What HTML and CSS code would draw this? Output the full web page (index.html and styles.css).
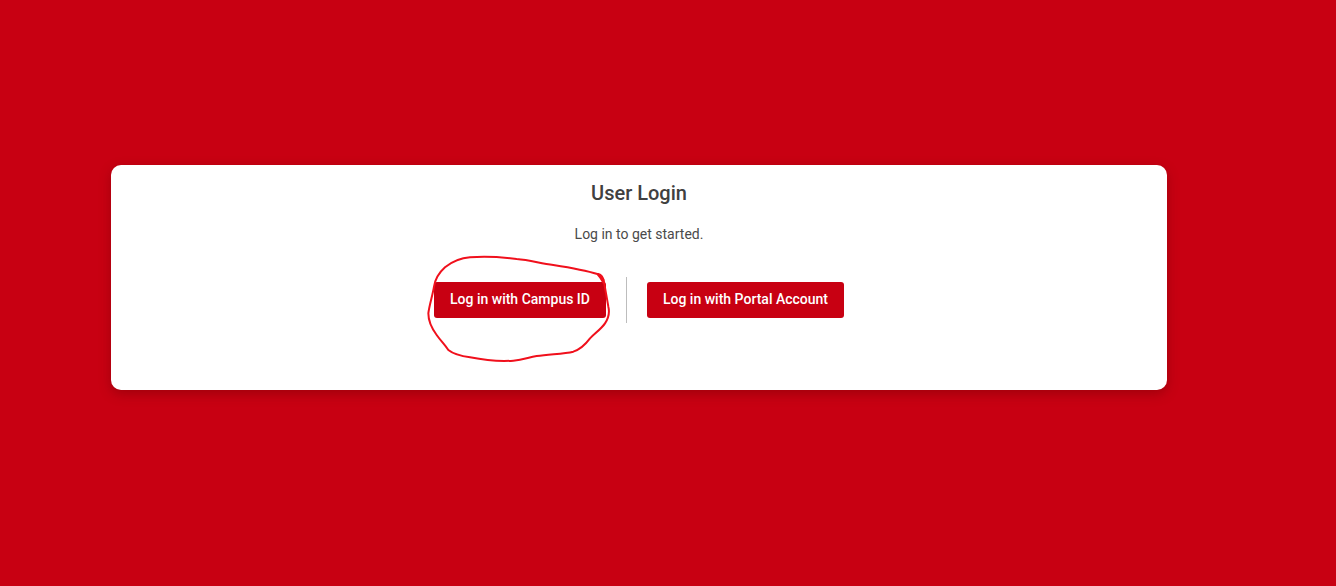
FILE: index.html
```html
<!DOCTYPE html>
<html lang="en">
<head>
<meta charset="utf-8">
<title>User Login</title>
<link rel="stylesheet" href="styles.css">
</head>
<body>
<main class="page">
  <section class="card">
    <h1 class="title">User Login</h1>
    <p class="lead">Log in to get started.</p>
    <div class="actions">
      <div class="slot">
        <a class="btn" href="#">Log in with Campus ID</a>
        <svg class="scribble" viewBox="0 0 600 345" aria-hidden="true">
          <path d="M535 72C555 85 552 95 550 98C545 88 538 78 532 72C500 62 470 56 400 45C360 40 330 30 290 27C250 22 200 18 150 22C120 24 95 36 75 52C55 70 45 90 42 110C38 135 28 165 25 190C25 210 35 235 50 255C62 272 75 285 85 300C100 312 120 318 150 322C190 330 240 335 280 332C310 330 325 322 350 318C390 312 430 312 460 305C480 298 495 285 510 265C525 250 545 235 555 220C565 205 570 190 565 170C560 140 555 115 552 95C550 85 545 75 535 72" />
        </svg>
      </div>
      <span class="divider"></span>
      <a class="btn" href="#">Log in with Portal Account</a>
    </div>
  </section>
</main>
</body>
</html>
```
FILE: styles.css
```css
* { box-sizing: border-box; }
html, body { margin: 0; height: 100%; }
body {
  background: #c80012;
  font-family: Roboto, "Liberation Sans", sans-serif;
  overflow: hidden;
}
.page {
  padding: 165px 169px 0 111px;
}
.card {
  height: 225px;
  background: #fff;
  border-radius: 10px;
  box-shadow: 0 4px 12px rgba(90, 0, 0, 0.35);
  padding-top: 16px;
  text-align: center;
}
.title {
  margin: 0;
  font-size: 20px;
  line-height: 24px;
  font-weight: 500;
  color: #404040;
}
.lead {
  margin: 19px 0 0;
  font-size: 14px;
  line-height: 20px;
  color: #4a4a4a;
}
.actions {
  display: flex;
  justify-content: center;
  align-items: center;
  margin-top: 33px;
  height: 46px;
}
.slot { position: relative; display: flex; }
.btn {
  display: block;
  height: 36px;
  padding: 0 16px;
  background: #c80012;
  color: #fff;
  border-radius: 3px;
  font-size: 14px;
  font-weight: 500;
  line-height: 35px;
  text-decoration: none;
  white-space: nowrap;
}
.divider {
  width: 1px;
  height: 46px;
  margin: 0 20px;
  background: #bdbdbd;
}
.scribble {
  position: absolute;
  left: -14px;
  top: -32px;
  width: 200px;
  height: 115px;
  fill: none;
  stroke: #f0101c;
  stroke-width: 6;
  stroke-linecap: round;
  stroke-linejoin: round;
  overflow: visible;
}
```
